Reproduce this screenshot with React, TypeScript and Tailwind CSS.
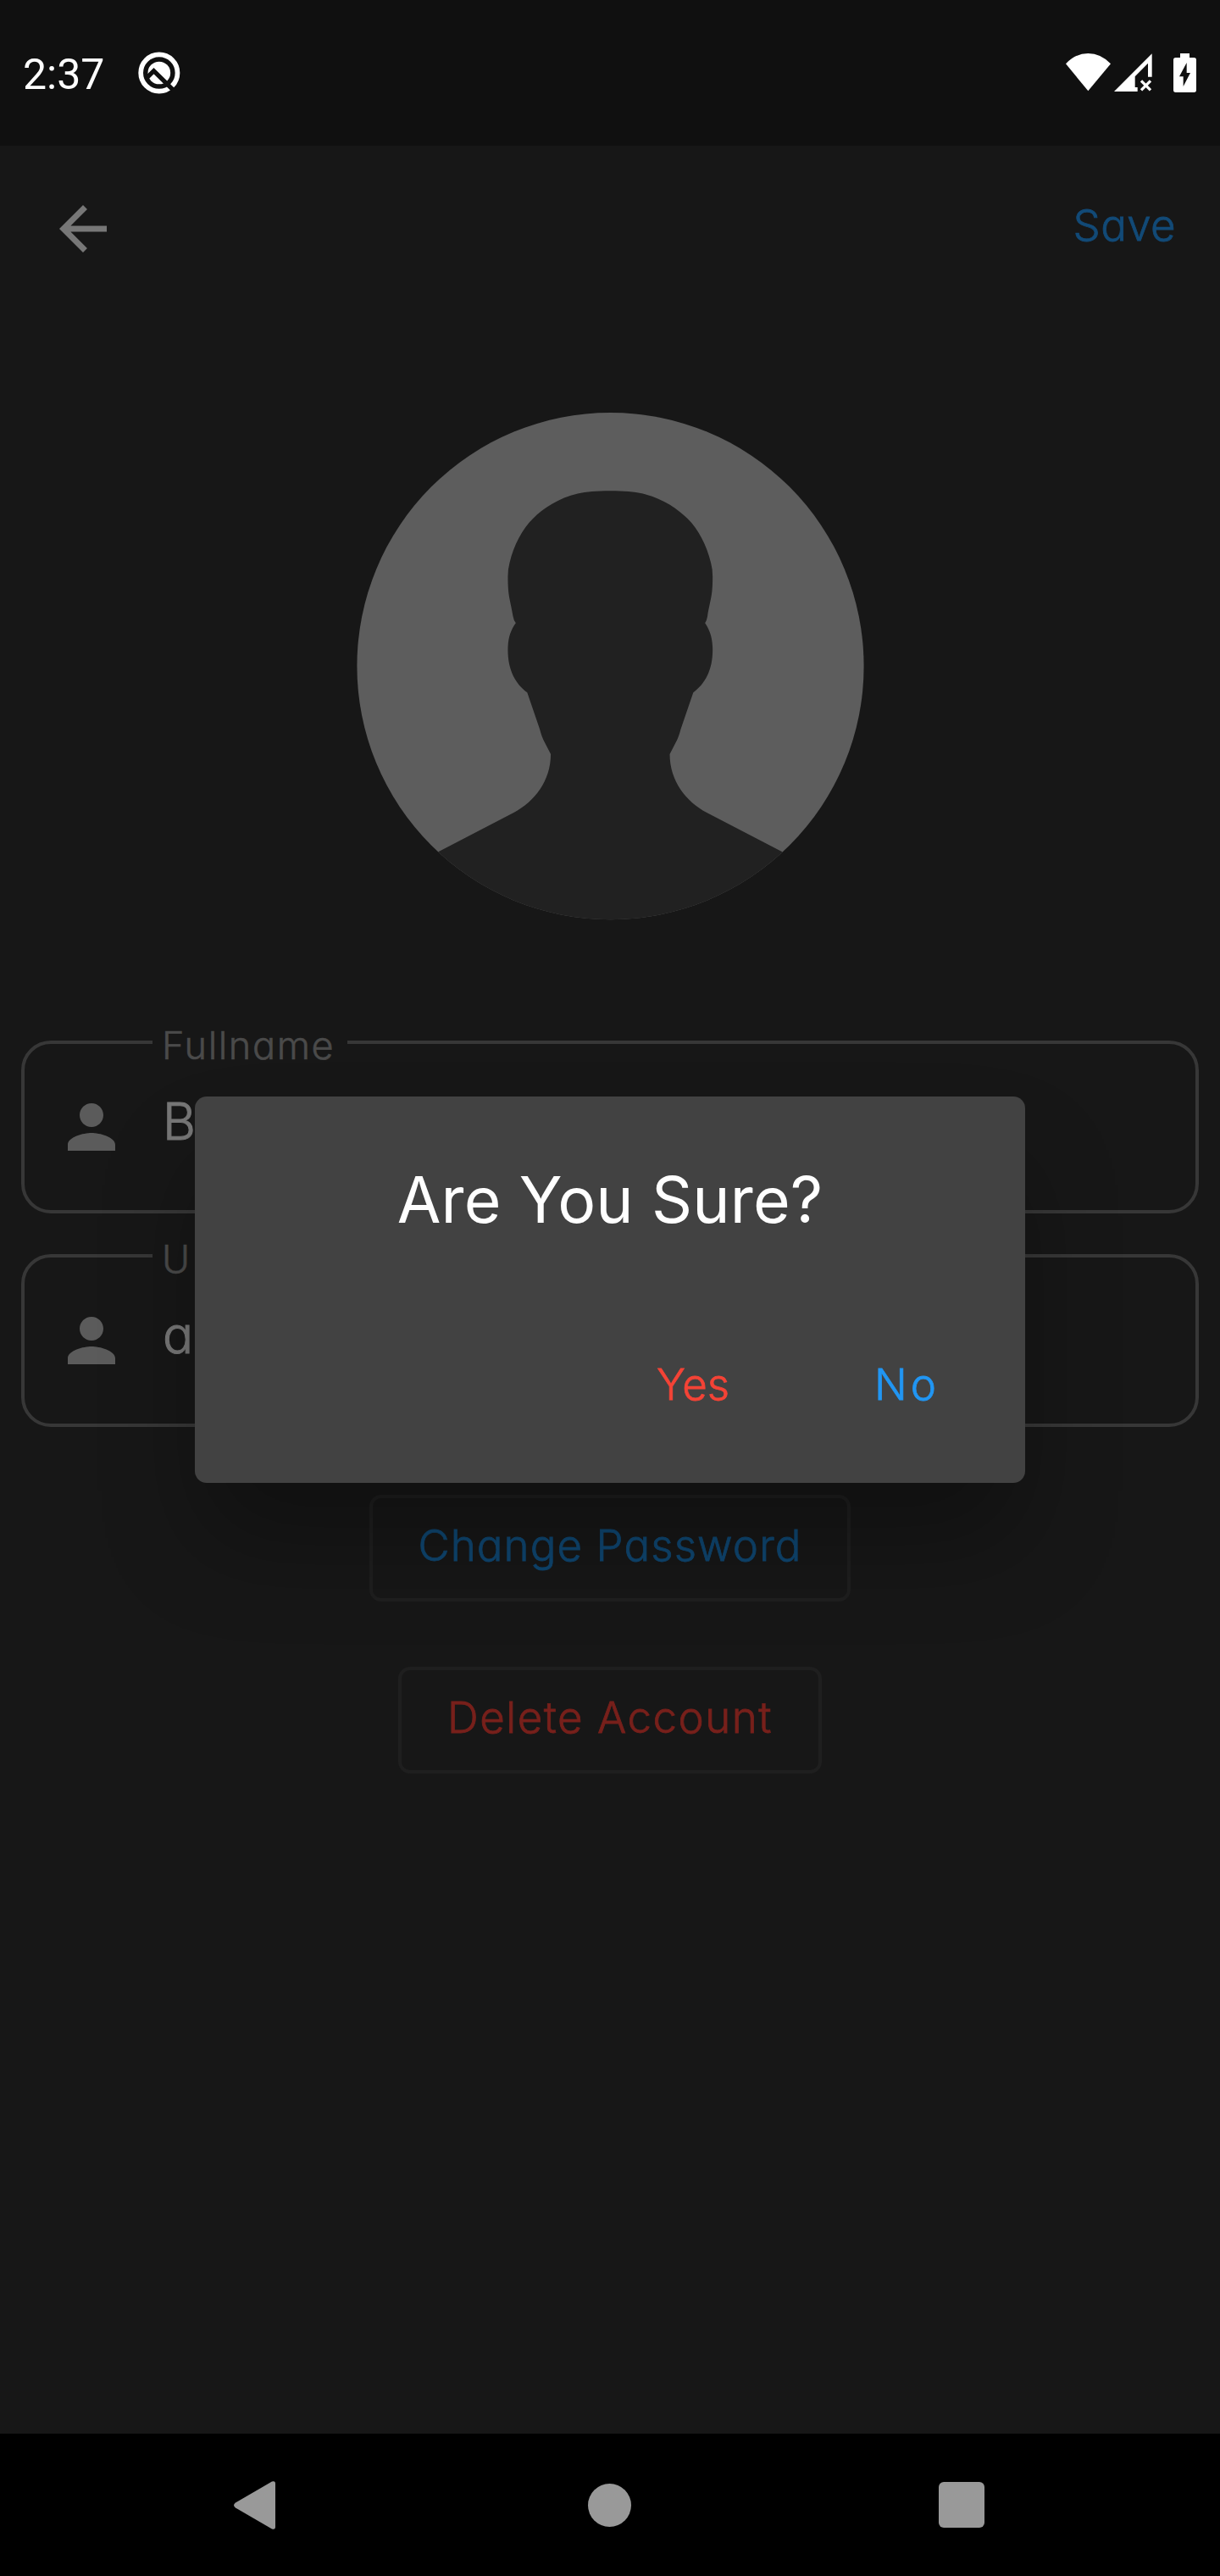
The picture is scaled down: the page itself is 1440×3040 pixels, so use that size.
import type { ReactNode } from "react";

function StatusBar() {
  return (
    <header className="flex h-[172px] items-start justify-between bg-[#101010] pt-[60px] pr-7 pl-[27px] text-white">
      <div className="flex items-start">
        <span className="w-[136px] font-[Roboto] text-[50px] leading-[57px]">2:37</span>
        <svg viewBox="488 93 149 150" className="mt-px h-[50px] w-[50px]" fill="none">
          <circle cx="562" cy="168" r="65" stroke="#fff" strokeWidth="17" />
          <circle cx="562" cy="168" r="40" fill="#fff" />
          <path d="M516 188 543 161 610 227" stroke="#101010" strokeWidth="16" />
        </svg>
      </div>
      <div className="flex h-[50px] items-start pt-[3px]">
        <svg viewBox="174 99 159 135" className="h-[45px] w-[53px]" fill="currentColor">
          <path d="M253 232 174 136Q208 99 253 99T333 136Z" />
        </svg>
        <svg viewBox="346 99 135 135" className="ml-1 h-[45px] w-[45px]" fill="currentColor">
          <path d="M346 234 480 100V182H466V134L420 181V219H429V234Z" />
          <path d="M442 196 475 229M475 196 442 229" stroke="currentColor" strokeWidth="10" />
        </svg>
        <svg viewBox="555 99 81 138" className="ml-[25px] h-[46px] w-[27px]" fill="currentColor">
          <path d="M579 99H612V114H628Q636 114 636 122V229Q636 237 628 237H563Q555 237 555 229V122Q555 114 563 114H579Z" />
          <path d="M602 132V168H615L590 216V181H576Z" fill="#101010" />
        </svg>
      </div>
    </header>
  );
}

function AppBar() {
  return (
    <div className="flex h-[196px] items-center justify-between pr-[52px] pl-14">
      <svg viewBox="0 0 24 24" className="h-[84px] w-[84px]" fill="#777777">
        <path d="M20 11H7.83l5.59-5.59L12 4l-8 8 8 8 1.41-1.41L7.83 13H20v-2z" />
      </svg>
      <span className="mb-[8px] text-[51px] leading-[60px] font-light tracking-[0.4px] text-[#124a77] [-webkit-text-stroke:0.8px]">
        Save
      </span>
    </div>
  );
}

function Avatar() {
  return (
    <svg viewBox="51 66 1467 1467" className="ml-[421px] mt-[119px] block h-[599px] w-[599px]">
      <clipPath id="avatar-clip">
        <circle cx="784.5" cy="798.5" r="732.5" />
      </clipPath>
      <g clipPath="url(#avatar-clip)">
        <rect x="51" y="66" width="1467" height="1467" fill="#5d5d5d" />
        <path
          fill="#212121"
          d="M784 292C745 292 715 294 690 300C635 313 590 342 560 373C530 402 505 450 493 500Q488 518 488 540C488 600 495 605 503 655Q505 667 511 674C497 694 488 715 488 752C488 810 510 850 544 875L580 980Q586 1004 595 1020L612 1053C612 1130 565 1190 505 1222L287 1335L200 1600H1370L1281 1335L1063 1222C1003 1190 956 1130 956 1053L973 1020Q982 1004 988 980L1024 875C1058 850 1080 810 1080 752C1080 715 1071 694 1058 674Q1063 667 1065 655C1073 605 1080 600 1080 540Q1080 518 1075 500C1063 450 1038 402 1008 373C978 342 933 313 878 300C853 294 823 292 784 292Z"
        />
      </g>
    </svg>
  );
}

function Field({ label, value, labelClass }: { label: string; value: string; labelClass: string }) {
  return (
    <fieldset className="h-[230px] rounded-[35px] border-4 border-[#373737] pl-[151px]">
      <legend
        className={`h-[56px] w-[230px] pt-[6px] pl-[11px] text-[45px] leading-[52px] font-light text-[#4a4a4a] [-webkit-text-stroke:0.6px] ${labelClass}`}
      >
        {label}
      </legend>
      <div className="-ml-[151px] flex h-[143px] items-center pl-[37px]">
        <svg viewBox="0 0 24 24" className="h-[84px] w-[84px]" fill="#5b5b5b">
          <path d="M12 12c2.21 0 4-1.79 4-4s-1.79-4-4-4-4 1.79-4 4 1.79 4 4 4zm0 2c-2.67 0-8 1.34-8 4v2h16v-2c0-2.66-5.33-4-8-4z" />
        </svg>
        <span className="mb-[14px] ml-[42px] text-[60px] leading-[70px] font-light text-[#777777] [-webkit-text-stroke:1px]">
          {value}
        </span>
      </div>
    </fieldset>
  );
}

function OutlinedButton({ className, children }: { className: string; children: ReactNode }) {
  return (
    <button
      className={`mx-auto flex h-[126px] items-center justify-center rounded-[14px] border-4 border-[#1f1f1f] pb-[8px] text-[51px] leading-none font-light [-webkit-text-stroke:0.8px] ${className}`}
    >
      {children}
    </button>
  );
}

function ConfirmDialog() {
  return (
    <div className="absolute inset-x-0 top-[1294px] flex justify-center">
      <div className="h-[456px] w-[980px] rounded-[14px] bg-[#424242] pt-[77px] pr-[101px] shadow-[0_75px_120px_-10px_rgba(0,0,0,0.3)]">
        <h2 className="mr-[-101px] text-center text-[75px] leading-[90px] font-normal tracking-[0.15px] text-white">
          Are You Sure?
        </h2>
        <div className="mt-[143px] flex justify-end gap-[171px] text-[51px] leading-[60px] font-light [-webkit-text-stroke:0.8px]">
          <button className="text-[#f44336]">Yes</button>
          <button className="tracking-[4px] text-[#2196f3]">No</button>
        </div>
      </div>
    </div>
  );
}

function NavBar() {
  return (
    <nav className="flex h-[168px] items-center justify-between bg-black pr-[278px] pl-[276px]">
      <svg viewBox="0 0 49 57" className="h-[57px] w-[49px]" fill="#999999">
        <path d="M45 .6Q49-.8 49 3V54Q49 57.800 45 56.400L2 31.500Q-2 28.500 2 25.500Z" />
      </svg>
      <span className="ml-[6px] h-[51px] w-[51px] rounded-full bg-[#999999]" />
      <span className="h-[54px] w-[54px] rounded-[6px] bg-[#999999]" />
    </nav>
  );
}

export default function App() {
  return (
    <div className="relative flex h-[3040px] w-[1440px] flex-col overflow-hidden bg-[#171717] font-[Inter,sans-serif] [font-feature-settings:'cv11']">
      <StatusBar />
      <main className="flex-1">
        <AppBar />
        <Avatar />
        <div className="mt-[116px] flex flex-col gap-[22px] px-[25px]">
          <Field label="Fullname" value="B" labelClass="tracking-[1.6px]" />
          <Field label="Username" value="a" labelClass="tracking-[4px]" />
        </div>
        <div className="mt-20 flex flex-col gap-[77px]">
          <OutlinedButton className="w-[568px] tracking-[1.1px] text-[#0f4670]">Change Password</OutlinedButton>
          <OutlinedButton className="w-[500px] tracking-[1.5px] text-[#77201b]">Delete Account</OutlinedButton>
        </div>
      </main>
      <NavBar />
      <ConfirmDialog />
    </div>
  );
}
